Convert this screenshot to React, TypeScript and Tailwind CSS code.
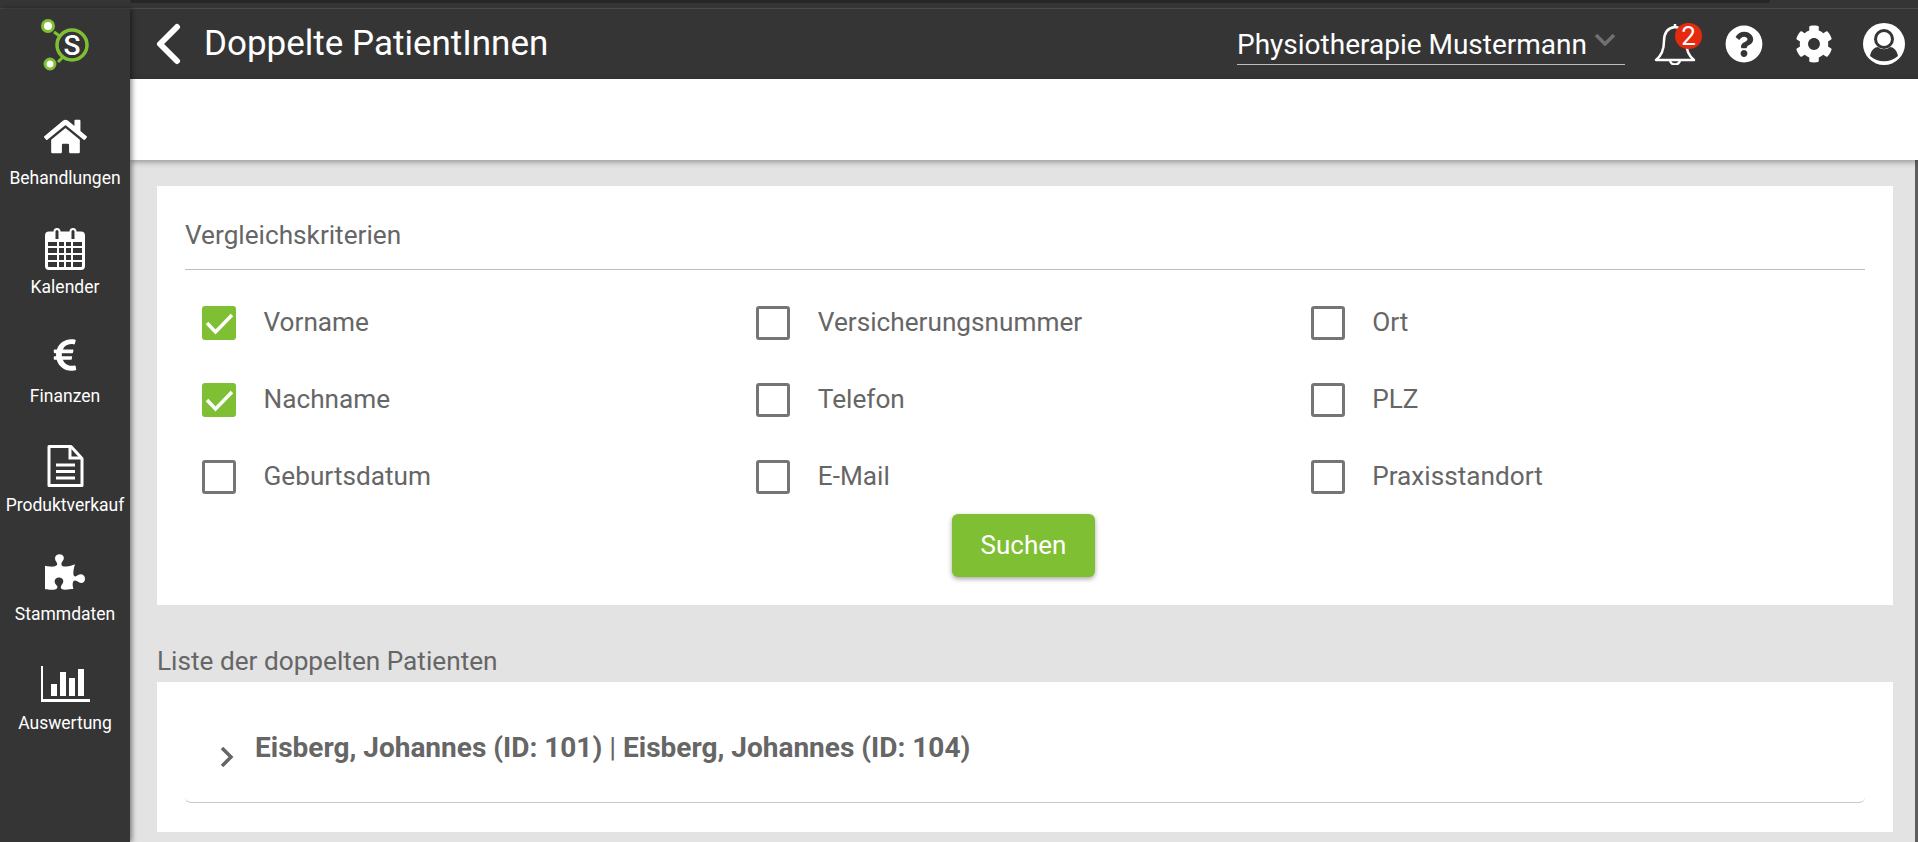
import { FaCog, FaEuroSign, FaHome, FaPuzzlePiece, FaQuestionCircle } from 'react-icons/fa';

const Calendar = () => (
  <svg className="mt-[6px]" width="40" height="43" viewBox="0 0 40 43" fill="none" stroke="#fff">
    <rect x="1.5" y="6" width="37" height="35.5" rx="2.5" strokeWidth="3" />
    <path d="M1 6h38v9H1z" fill="#fff" stroke="none" />
    <path d="M13 15v26M20 15v26M27 15v26M3 20h34M3 27h34M3 34h34" strokeWidth="2" />
    <path d="M9.5 12V4.5a2.5 2.5 0 0 1 5 0V12M25.5 12V4.5a2.5 2.5 0 0 1 5 0V12" fill="#353535" strokeWidth="2" />
  </svg>
);

const Doc = () => (
  <svg className="mt-[6px]" width="37" height="42" viewBox="0 0 37 42" fill="none" stroke="#fff" strokeWidth="3">
    <path d="M2 1.5h22l11 12v27H2z" strokeLinejoin="round" />
    <path d="M23 2v11h12" />
    <path d="M9 20h19M9 26.5h19M9 33h19" />
  </svg>
);

const Chart = () => (
  <svg className="mt-[6px]" width="49" height="36" viewBox="0 0 49 36" fill="#fff">
    <path d="M0 0h2v33h47v3H0z" />
    <path d="M10 18h6v12h-6zM19 6h6v24h-6zM28 12h6v18h-6zM37 3h6v27h-6z" />
  </svg>
);

const Logo = () => (
  <svg width="50" height="54" viewBox="0 0 50 54" fill="none">
    <path d="M14 14l7 5M18 44l5-5" stroke="#7fbf33" strokeWidth="3" />
    <circle cx="32" cy="27" r="15" stroke="#7fbf33" strokeWidth="3.5" />
    <circle cx="8" cy="8" r="5.5" fill="#fff" stroke="#7fbf33" strokeWidth="3" />
    <circle cx="10" cy="46" r="5" fill="#fff" stroke="#7fbf33" strokeWidth="3" />
    <text x="32" y="37" textAnchor="middle" fill="#fff" fontSize="28" fontWeight="500" fontFamily="Roboto, sans-serif">S</text>
  </svg>
);

const Bell = () => (
  <svg width="42" height="42" viewBox="0 0 42 42" fill="none" stroke="#fff" strokeWidth="2.5" strokeLinejoin="round">
    <path d="M21 1v3c-8 1-11 7-11 14 0 9-3 15-8 19h38c-5-4-8-10-8-19 0-7-3-13-11-14" />
    <path d="M16 37a5 4.5 0 0 0 10 0" strokeWidth="2.5" />
  </svg>
);

const UserCircle = () => (
  <svg width="42" height="42" viewBox="0 0 42 42">
    <circle cx="21" cy="21" r="21" fill="#fff" />
    <circle cx="21" cy="16" r="8.5" fill="none" stroke="#353535" strokeWidth="3" />
    <path d="M7 33c1-6 5-9 8-9 3 3 9 3 12 0 3 0 7 3 8 9-8 7-20 7-28 0z" fill="#353535" />
  </svg>
);

const navItems = [
  { label: 'Behandlungen', icon: <FaHome size={43} color="#fff" /> },
  { label: 'Kalender', icon: <Calendar /> },
  { label: 'Finanzen', icon: <FaEuroSign className="mt-[2px]" size={36} color="#fff" /> },
  { label: 'Produktverkauf', icon: <Doc /> },
  { label: 'Stammdaten', icon: <FaPuzzlePiece size={40} color="#fff" /> },
  { label: 'Auswertung', icon: <Chart /> },
];

const criteria = [
  { label: 'Vorname', checked: true },
  { label: 'Versicherungsnummer', checked: false },
  { label: 'Ort', checked: false },
  { label: 'Nachname', checked: true },
  { label: 'Telefon', checked: false },
  { label: 'PLZ', checked: false },
  { label: 'Geburtsdatum', checked: false },
  { label: 'E-Mail', checked: false },
  { label: 'Praxisstandort', checked: false },
];

function Checkbox({ checked }: { checked: boolean }) {
  if (checked) {
    return (
      <span className="h-[34px] w-[34px] rounded-[3px] bg-[#7fbf33]">
        <svg width="34" height="34" viewBox="0 0 34 34" fill="none" stroke="#fff" strokeWidth="3.5">
          <path d="M5 17l8.5 9L30 9" />
        </svg>
      </span>
    );
  }
  return <span className="h-[34px] w-[34px] rounded-[3px] border-[3px] border-[#757575]" />;
}

export default function App() {
  return (
    <div className="flex h-[842px] w-[1918px] flex-col overflow-hidden bg-[#353535] font-['Roboto',sans-serif] text-[#666]">
      <div className="h-[9px] border-b border-[#4a4a4a]">
        <div className="ml-[130px] h-[3px] w-[1640px] rounded-b bg-[#262626]" />
      </div>
      <div className="flex min-h-0 flex-1">
        <aside className="relative z-20 flex w-[130px] shrink-0 flex-col items-center bg-[#353535] shadow-[2px_0_5px_rgba(0,0,0,0.45)]">
          <div className="mt-[9px] flex h-[52px] w-full justify-center pr-[1px]">
            <Logo />
          </div>
          <nav className="mt-[38px] flex w-full flex-col">
            {navItems.map((item) => (
              <div key={item.label} className="flex h-[109px] flex-col items-center">
                <div className="flex h-[56px] items-center justify-center">{item.icon}</div>
                <span className="mt-[2px] whitespace-nowrap text-[17.5px] leading-[24px] text-white">{item.label}</span>
              </div>
            ))}
          </nav>
        </aside>
        <main className="flex min-w-0 flex-1 flex-col">
          <header className="flex h-[70px] shrink-0 items-center pr-[13px] text-white">
            <svg className="ml-[25px]" width="26" height="42" viewBox="0 0 26 42" fill="none" stroke="#fff" strokeWidth="6" strokeLinecap="round" strokeLinejoin="round">
              <path d="M22 4L5 21l17 17" />
            </svg>
            <h1 className="ml-[23px] text-[35px] leading-[40px] font-normal">Doppelte PatientInnen</h1>
            <div className="ml-auto flex h-[42px] w-[388px] items-start border-b border-[#bdbdbd] pt-[5px] text-[28px] leading-[34px]">
              Physiotherapie Mustermann
              <svg className="ml-[8px] mt-[6px]" width="20" height="12" viewBox="0 0 20 12" fill="none" stroke="#707070" strokeWidth="3.5">
                <path d="M1 1l9 9 9-9" />
              </svg>
            </div>
            <div className="relative ml-[29px] h-[42px] w-[42px]">
              <Bell />
              <span className="absolute top-0 left-[21px] flex h-[26px] w-[27px] items-center justify-center rounded-full bg-[#e62a10] text-[26px] leading-none text-white">2</span>
            </div>
            <FaQuestionCircle className="ml-[29px]" size={38} color="#fff" />
            <FaCog className="ml-[32px]" size={38} color="#fff" />
            <div className="ml-[30px] h-[42px]">
              <UserCircle />
            </div>
          </header>
          <div className="relative z-10 h-[81px] shrink-0 bg-white shadow-[0_2px_6px_rgba(0,0,0,0.35)]" />
          <div className="flex-1 border-r-[3px] border-[#5f5f5f] bg-[#e3e3e3] pl-[27px] pr-[22px] pt-[26px]">
            <section className="h-[419px] bg-white px-[28px] pt-[31px]">
              <h2 className="h-[53px] border-b border-[#bdbdbd] text-[26.2px] leading-[36px] font-normal">Vergleichskriterien</h2>
              <div className="mt-[14px] grid auto-rows-[77px] grid-cols-3 pl-[17px]">
                {criteria.map((c) => (
                  <label key={c.label} className="flex items-center gap-[27.5px] text-[26.2px]">
                    <Checkbox checked={c.checked} />
                    {c.label}
                  </label>
                ))}
              </div>
              <div className="-mt-[1px] flex justify-center pr-[3px]">
                <button className="h-[63px] w-[143px] rounded-[6px] bg-[#7fbf33] text-[26px] text-white shadow-[0_2px_5px_rgba(0,0,0,0.35)]">Suchen</button>
              </div>
            </section>
            <h3 className="mt-[38px] mb-[3px] text-[26.2px] leading-[36px] font-normal">Liste der doppelten Patienten</h3>
            <section className="h-[150px] bg-white px-[28px]">
              <div className="flex h-[121px] items-start rounded-b-[6px] border-b border-[#c8c8c8] pt-[46px] pl-[35px]">
                <svg className="mt-[19px]" width="14" height="20" viewBox="0 0 14 20" fill="none" stroke="#666" strokeWidth="3.5">
                  <path d="M2 1l9 9-9 9" />
                </svg>
                <span className="ml-[21px] text-[28px] leading-[40px] font-bold">
                  Eisberg, Johannes (ID: 101) <span className="font-normal">|</span> Eisberg, Johannes (ID: 104)
                </span>
              </div>
            </section>
          </div>
        </main>
      </div>
    </div>
  );
}
